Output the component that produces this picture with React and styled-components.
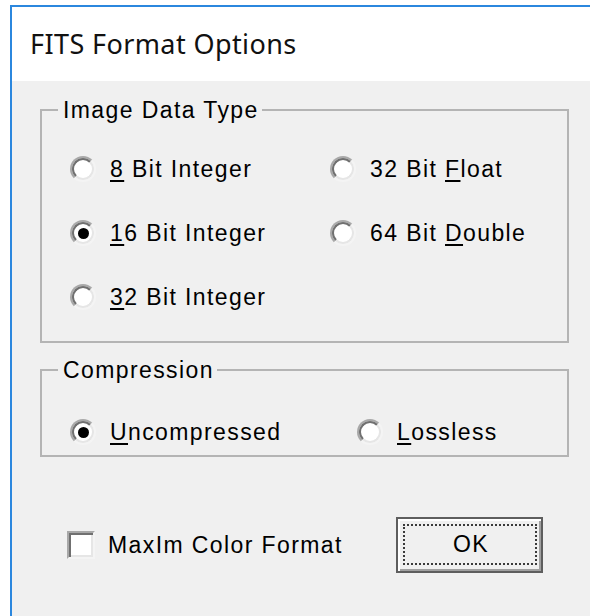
import React from "react";
import styled, { createGlobalStyle } from "styled-components";

const GlobalStyle = createGlobalStyle`
  html, body {
    margin: 0;
    padding: 0;
    background: #ffffff;
    overflow: hidden;
  }
  * { box-sizing: border-box; }
`;

const Window = styled.div`
  margin: 5px 0 0 10px;
  height: 611px;
  display: flex;
  flex-direction: column;
  border-top: 2px solid #2b87de;
  border-left: 2px solid #2b87de;
`;

const TitleBar = styled.div`
  height: 74px;
  flex: none;
  display: flex;
  align-items: center;
  padding-left: 18px;
  padding-bottom: 2px;
  background: #ffffff;
  font-family: "Noto Sans", "Open Sans", sans-serif;
  font-size: 27px;
  letter-spacing: 0.4px;
  color: #111111;
`;

const Client = styled.div`
  flex: 1;
  background: #f0f0f0;
  padding: 18px 21px 0 28px;
  font-family: "Liberation Sans", Arial, sans-serif;
  font-size: 23px;
  letter-spacing: 1.4px;
  color: #000000;
`;

const Group = styled.fieldset`
  margin: ${(p) => (p.$first ? "0" : "16px 0 0 0")};
  padding: 0;
  min-width: 0;
  border: 2px solid #b4b4b4;
`;

const Legend = styled.legend`
  margin-left: 16px;
  padding: 0 3px 0 5px;
  line-height: 22px;
  height: 22px;
`;

const Options = styled.div`
  display: grid;
  grid-template-columns: ${(p) => p.$col}px 1fr;
  row-gap: 38px;
  padding: ${(p) => p.$pad};
`;

const Choice = styled.label`
  display: flex;
  align-items: center;
  gap: 14px;
  height: 26px;
  line-height: 26px;
  white-space: nowrap;
`;

const RadioMark = styled.span`
  position: relative;
  flex: none;
  width: 26px;
  height: 26px;
  border-radius: 50%;
  background: #ffffff;
  border: 2px solid;
  border-color: #a8a8a8 #f4f4f4 #f4f4f4 #a8a8a8;

  &::after {
    content: "";
    position: absolute;
    inset: 0;
    border-radius: 50%;
    border: 2px solid;
    border-color: #707070 #e6e6e6 #e6e6e6 #707070;
  }

  &::before {
    content: "";
    display: ${(p) => (p.$checked ? "block" : "none")};
    position: absolute;
    left: 50%;
    top: 50%;
    width: 11px;
    height: 11px;
    margin: -5.5px 0 0 -5.5px;
    border-radius: 50%;
    background: #000000;
  }
`;

const Key = styled.u`
  text-decoration: underline;
  text-decoration-thickness: 2px;
  text-underline-offset: 3px;
`;

const Footer = styled.div`
  display: flex;
  align-items: center;
  margin-top: 60px;
  padding-left: 27px;
`;

const CheckRow = styled.label`
  width: 329px;
  display: flex;
  align-items: center;
  gap: 13px;
  white-space: nowrap;
`;

const CheckMark = styled.span`
  flex: none;
  width: 28px;
  height: 28px;
  background: #ffffff;
  border: 2px solid;
  border-color: #a8a8a8 #f4f4f4 #f4f4f4 #a8a8a8;
  box-shadow: inset 2px 2px 0 #707070, inset -2px -2px 0 #e6e6e6;
`;

const Button = styled.button`
  width: 147px;
  height: 56px;
  display: flex;
  padding: 5px 4px 6px 5px;
  background: #f0f0f0;
  border: 2px solid #5e5e5e;
  box-shadow: inset 2px 2px 0 #ffffff, inset -2px -2px 0 #a0a0a0;
  font: inherit;
  letter-spacing: 1.4px;
  color: #000000;
`;

const FocusRing = styled.span`
  flex: 1;
  display: flex;
  align-items: center;
  justify-content: center;
  border: 2px dotted #3a3a3a;
  padding-left: 2px;
`;

function Radio({ checked, children }) {
  return (
    <Choice>
      <RadioMark $checked={checked} />
      <span>{children}</span>
    </Choice>
  );
}

export default function App() {
  return (
    <>
      <GlobalStyle />
      <Window>
        <TitleBar>FITS Format Options</TitleBar>
        <Client>
          <Group $first>
            <Legend>Image Data Type</Legend>
            <Options $col={260} $pad="35px 0 31px 28px">
              <Radio>
                <Key>8</Key> Bit Integer
              </Radio>
              <Radio>
                32 Bit <Key>F</Key>loat
              </Radio>
              <Radio checked>
                <Key>1</Key>6 Bit Integer
              </Radio>
              <Radio>
                64 Bit <Key>D</Key>ouble
              </Radio>
              <Radio>
                <Key>3</Key>2 Bit Integer
              </Radio>
            </Options>
          </Group>

          <Group>
            <Legend>Compression</Legend>
            <Options $col={287} $pad="38px 0 10px 28px">
              <Radio checked>
                <Key>U</Key>ncompressed
              </Radio>
              <Radio>
                <Key>L</Key>ossless
              </Radio>
            </Options>
          </Group>

          <Footer>
            <CheckRow>
              <CheckMark />
              <span>MaxIm Color Format</span>
            </CheckRow>
            <Button type="button">
              <FocusRing>OK</FocusRing>
            </Button>
          </Footer>
        </Client>
      </Window>
    </>
  );
}
